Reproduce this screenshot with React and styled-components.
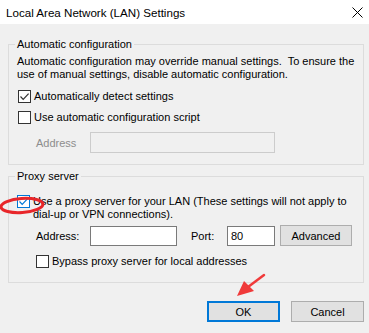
import React from 'react';
import styled, { createGlobalStyle } from 'styled-components';

const GlobalStyle = createGlobalStyle`
  html, body {
    margin: 0;
    padding: 0;
    background: #f0f0f0;
  }
  body {
    font-family: "Liberation Sans", Arial, sans-serif;
    font-size: 11px;
    color: #000;
  }
`;

const Window = styled.div`
  width: 369px;
  height: 333px;
  background: #f0f0f0;
  display: flex;
  flex-direction: column;
  position: relative;
  overflow: hidden;
`;

const TitleBar = styled.div`
  flex: none;
  height: 24px;
  background: #fff;
  display: flex;
  align-items: center;
  justify-content: space-between;
  padding: 0 6px;
  box-sizing: border-box;
  font-size: 11.6px;
`;

const Body = styled.div`
  flex: none;
  display: flex;
  flex-direction: column;
  padding: 12px 5px 0 8px;
  gap: 3px;
`;

const Group = styled.fieldset`
  margin: 0;
  padding: ${p => p.$pad || '3px 8px 11px 8px'};
  border: 1px solid #dcdcdc;
  min-width: 0;
  display: flex;
  flex-direction: column;
`;

const Legend = styled.legend`
  padding: 0 2px;
  margin-left: -2px;
  line-height: 16px;
`;

const Note = styled.div`
  line-height: 13px;
  white-space: nowrap;
`;

const CheckRow = styled.label`
  display: flex;
  align-items: ${p => (p.$top ? 'flex-start' : 'center')};
  gap: 3px;
  margin: ${p => p.$m || '0'};
  line-height: 13px;
  white-space: nowrap;
`;

const Box = styled.span`
  width: 13px;
  height: 13px;
  flex: none;
  box-sizing: border-box;
  border: 1px solid ${p => (p.$blue ? '#0078d7' : '#333')};
  background: #fff;
  display: flex;
  align-items: center;
  justify-content: center;
`;

const Row = styled.div`
  display: flex;
  align-items: center;
  margin: ${p => p.$m || '0'};
`;

const FieldLabel = styled.span`
  width: ${p => p.$w}px;
  flex: none;
  color: ${p => (p.$disabled ? '#8d8d8d' : '#000')};
`;

const Field = styled.div`
  width: ${p => p.$w}px;
  height: ${p => p.$h || 20}px;
  flex: none;
  box-sizing: border-box;
  border: 1px solid ${p => (p.$disabled ? '#cccccc' : '#7a7a7a')};
  background: ${p => (p.$disabled ? '#f0f0f0' : '#fff')};
  padding: 0 3px;
  display: flex;
  align-items: center;
  margin-right: ${p => p.$mr || 0}px;
`;

const Button = styled.button`
  width: ${p => p.$w || 73}px;
  height: ${p => p.$h || 21}px;
  flex: none;
  box-sizing: border-box;
  background: #e1e1e1;
  border: ${p => (p.$default ? '2px solid #0078d7' : '1px solid #adadad')};
  font: inherit;
  color: #000;
  padding: 0;
`;

const Footer = styled.div`
  display: flex;
  justify-content: flex-end;
  gap: 11px;
  padding: 15px 0 0 0;
`;

const Overlay = styled.svg`
  position: absolute;
  left: 0;
  top: 0;
  pointer-events: none;
`;

const Check = ({ blue }) => (
  <svg width="11" height="11" viewBox="0 0 11 11">
    <path d="M1.5 5.5 L4.2 8.3 L9.6 2.6" fill="none" stroke={blue ? '#0078d7' : '#333'} strokeWidth="1.2" />
  </svg>
);

const Close = () => (
  <svg width="11" height="11" viewBox="0 0 11 11">
    <path d="M0.5 0.5 L10.5 10.5 M10.5 0.5 L0.5 10.5" stroke="#000" strokeWidth="1" />
  </svg>
);

const App = () => (
  <Window>
    <GlobalStyle />
    <TitleBar>
      <span>Local Area Network (LAN) Settings</span>
      <Close />
    </TitleBar>
    <Body>
      <Group>
        <Legend>Automatic configuration</Legend>
        <Note>
          Automatic configuration may override manual settings.&nbsp; To ensure the<br />
          use of manual settings, disable automatic configuration.
        </Note>
        <CheckRow $m="9px 0 0 1px">
          <Box><Check /></Box>
          Automatically detect settings
        </CheckRow>
        <CheckRow $m="8px 0 0 1px">
          <Box />
          Use automatic configuration script
        </CheckRow>
        <Row $m="8px 0 0 19px">
          <FieldLabel $w={54} $disabled>Address</FieldLabel>
          <Field $w={185} $h={21} $disabled />
        </Row>
      </Group>
      <Group $pad="3px 8px 14px 8px">
        <Legend>Proxy server</Legend>
        <CheckRow $top $m="8px 0 0 0">
          <Box $blue><Check blue /></Box>
          <span>
            Use a proxy server for your LAN (These settings will not apply to<br />
            dial-up or VPN connections).
          </span>
        </CheckRow>
        <Row $m="4px 0 0 19px">
          <FieldLabel $w={54}>Address:</FieldLabel>
          <Field $w={87} $mr={14} />
          <FieldLabel $w={36}>Port:</FieldLabel>
          <Field $w={48} $mr={5}>80</Field>
          <Button $w={72} $h={21}>Advanced</Button>
        </Row>
        <CheckRow $m="9px 0 0 19px">
          <Box />
          Bypass proxy server for local addresses
        </CheckRow>
      </Group>
      <Footer>
        <Button $default>OK</Button>
        <Button>Cancel</Button>
      </Footer>
    </Body>
    <Overlay width="369" height="333">
      <ellipse cx="22" cy="205.5" rx="21" ry="7" fill="none" stroke="#e8262a" strokeWidth="3" transform="rotate(-4 22 205.5)" />
      <path d="M264 275 L248 287" stroke="#f03a3a" strokeWidth="2.5" strokeLinecap="round" />
      <path d="M237 296 L244 281 L254 291 Z" fill="#f03a3a" />
    </Overlay>
  </Window>
);

export default App;
